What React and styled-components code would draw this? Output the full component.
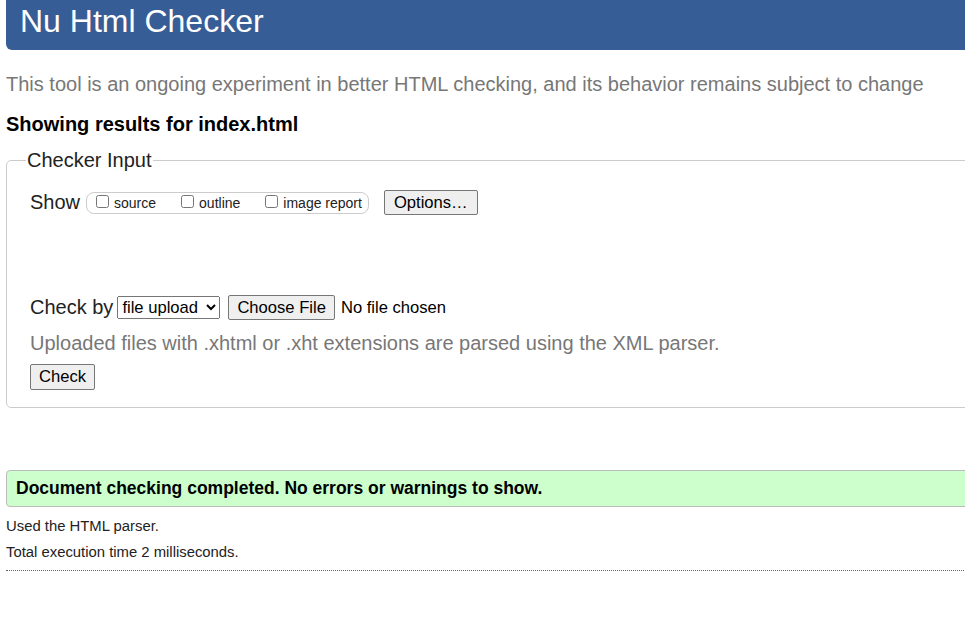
import React from 'react'
import styled, { createGlobalStyle } from 'styled-components'

const GlobalStyle = createGlobalStyle`
    html {
        overflow: hidden;
    }
    body {
        margin: 0;
        background: #fff;
        color: #000;
        font-family: "Liberation Sans", Arial, sans-serif;
    }
`

const Page = styled.div`
    width: 1100px;
    padding: 0 6px;
`

const Header = styled.h1`
    box-sizing: border-box;
    margin: 0;
    height: 50px;
    padding: 0 14px 8px;
    display: flex;
    align-items: center;
    background: #365d95;
    color: #fff;
    font-size: 32px;
    font-weight: normal;
    border-radius: 0 0 0 6px;
`

const Intro = styled.p`
    margin: 21px 0 0;
    font-size: 20px;
    color: #777;
    line-height: 26px;
`

const ResultsFor = styled.h2`
    margin: 14px 0 0;
    font-size: 20px;
    line-height: 26px;
`

const Fieldset = styled.fieldset`
    margin: 12px 0 0;
    padding: 18px 23px 17px;
    border: 1px solid #ccc;
    border-radius: 5px;
`

const Legend = styled.legend`
    padding: 0 1px;
    margin-left: -4px;
    font-size: 20px;
    color: #222;
`

const Row = styled.div`
    display: flex;
    align-items: center;
    gap: ${ props => props.gap || 6 }px;
    margin-top: ${ props => props.top || 0 }px;
`

const Label = styled.span`
    font-size: 20px;
    color: #222;
`

const Pill = styled.div`
    display: flex;
    align-items: center;
    gap: 24px;
    height: 20px;
    padding: 0 6px 0 8px;
    border: 1px solid #ccc;
    border-radius: 8px;
    margin-right: 9px;
`

const CheckLabel = styled.label`
    display: flex;
    align-items: center;
    font-size: 14px;
    color: #222;
    input {
        margin: 0 5px 0 1px;
        width: 13px;
        height: 13px;
        position: relative;
        top: -1px;
    }
`

const Button = styled.button`
    font-family: "Liberation Sans", Arial, sans-serif;
    font-size: 16.6px;
    height: ${ props => props.h || 25 }px;
    padding: 0 ${ props => props.px || 8 }px;
    background: #efefef;
    color: #000;
    border: 1px solid #767676;
    border-radius: 2px;
`

const Select = styled.select`
    font-family: "Liberation Sans", Arial, sans-serif;
    font-size: 16.6px;
    width: 103px;
    height: 23px;
    color: #000;
`

const FileInput = styled.input`
    font-family: "Liberation Sans", Arial, sans-serif;
    font-size: 16.6px;
    color: #000;
    margin-left: 4px;
    &::file-selector-button {
        font-family: "Liberation Sans", Arial, sans-serif;
        font-size: 16.6px;
        height: 25px;
        padding: 0 8px;
        margin-right: 6px;
        background: #efefef;
        border: 1px solid #767676;
        border-radius: 2px;
    }
`

const Hint = styled.p`
    margin: 11px 0 0;
    font-size: 20px;
    color: #777;
    line-height: 24px;
`

const Success = styled.div`
    margin-top: 62px;
    height: 35px;
    display: flex;
    align-items: center;
    padding: 0 9px;
    background: #ccffcc;
    border: 1px solid #bbb;
    border-radius: 4px;
    font-size: 17.5px;
    font-weight: bold;
`

const Note = styled.p`
    margin: ${ props => props.top || 0 }px 0 0;
    font-size: 14.85px;
    line-height: 16px;
    color: #222;
`

const Rule = styled.hr`
    margin: 10px 0 0;
    border: 0;
    border-top: 1px dotted #666;
`

const App = () => (
    <>
        <GlobalStyle />
        <Page>
            <Header>Nu Html Checker</Header>
            <Intro>This tool is an ongoing experiment in better HTML checking, and its behavior remains subject to change</Intro>
            <ResultsFor>Showing results for index.html</ResultsFor>

            <Fieldset>
                <Legend>Checker Input</Legend>
                <Row>
                    <Label>Show</Label>
                    <Pill>
                        <CheckLabel><input type="checkbox" />source</CheckLabel>
                        <CheckLabel><input type="checkbox" />outline</CheckLabel>
                        <CheckLabel><input type="checkbox" />image report</CheckLabel>
                    </Pill>
                    <Button px={9}>Options…</Button>
                </Row>

                <Row top={80} gap={4}>
                    <Label>Check by</Label>
                    <Select defaultValue="upload">
                        <option value="upload">file upload</option>
                        <option value="address">address</option>
                        <option value="text">text input</option>
                    </Select>
                    <FileInput type="file" />
                </Row>
                <Hint>Uploaded files with .xhtml or .xht extensions are parsed using the XML parser.</Hint>
                <Row top={9}>
                    <Button h={26} px={8}>Check</Button>
                </Row>
            </Fieldset>

            <Success>Document checking completed. No errors or warnings to show.</Success>
            <Note top={11}>Used the HTML parser.</Note>
            <Note top={10}>Total execution time 2 milliseconds.</Note>
            <Rule />
        </Page>
    </>
)

export default App
